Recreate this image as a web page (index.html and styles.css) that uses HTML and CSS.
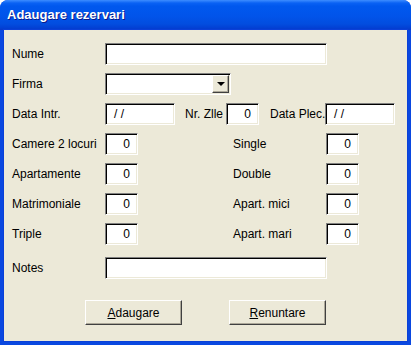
FILE: index.html
```html
<!DOCTYPE html>
<html lang="ro">
<head>
    <meta charset="UTF-8">
    <title>Adaugare rezervari</title>
    <link rel="stylesheet" href="styles.css">
</head>
<body>
    <div class="window">
        <div class="titlebar">Adaugare rezervari</div>

        <div class="client">
            <!-- Nume / Firma -->
            <div class="row">
                <span class="label">Nume</span>
                <div class="field wide"></div>
            </div>
            <div class="row">
                <span class="label">Firma</span>
                <div class="field combo">
                    <span class="combo-btn"><span class="arrow"></span></span>
                </div>
            </div>

            <!-- Dates -->
            <div class="row">
                <span class="label">Data Intr.</span>
                <div class="field date">/ /</div>
                <span class="label-zile">Nr. Zlle</span>
                <div class="field num">0</div>
                <span class="label-plec">Data Plec.</span>
                <div class="field date">/ /</div>
            </div>

            <!-- Rooms -->
            <div class="row">
                <span class="label">Camere 2 locuri</span>
                <div class="field num">0</div>
                <span class="label-right">Single</span>
                <div class="field num">0</div>
            </div>
            <div class="row">
                <span class="label">Apartamente</span>
                <div class="field num">0</div>
                <span class="label-right">Double</span>
                <div class="field num">0</div>
            </div>
            <div class="row">
                <span class="label">Matrimoniale</span>
                <div class="field num">0</div>
                <span class="label-right">Apart. mici</span>
                <div class="field num">0</div>
            </div>
            <div class="row">
                <span class="label">Triple</span>
                <div class="field num">0</div>
                <span class="label-right">Apart. mari</span>
                <div class="field num">0</div>
            </div>

            <div class="row notes">
                <span class="label">Notes</span>
                <div class="field wide"></div>
            </div>

            <div class="buttons">
                <button><u>A</u>daugare</button>
                <button><u>R</u>enuntare</button>
            </div>
        </div>
    </div>
</body>
</html>
```

FILE: styles.css
```css
body {
    margin: 0;
    background: #fff;
    font-family: "Liberation Sans", Arial, sans-serif;
    font-size: 12px;
}
.window {
    width: 411px;
    height: 345px;
    border-radius: 8px 8px 0 0;
    overflow: hidden;
    background: #0a48e0;
    display: flex;
    flex-direction: column;
}
.titlebar {
    height: 30px;
    flex: none;
    box-sizing: border-box;
    padding: 7px 0 0 7px;
    color: #fff;
    font-weight: bold;
    font-size: 13px;
    text-shadow: 1px 1px #0a1a8a;
    background: linear-gradient(to bottom, #3d8dff 0, #0a62f4 3px, #0058ee 6px, #0154ea 16px, #024ddf 24px, #0240d4 28px, #0838c8 30px);
}
.client {
    flex: 1;
    margin: 0 4px 4px 4px;
    background: #ece9d8;
    padding: 13px 0 0 8px;
    box-shadow: 0 0 0 1px #0a40d8;
}
.row {
    display: flex;
    align-items: center;
    height: 22px;
    margin-bottom: 8px;
    white-space: nowrap;
}
.row > * {
    flex: none;
}
.label {
    width: 93px;
}
.label-zile {
    margin-left: 10px;
    width: 41px;
}
.label-plec {
    margin-left: 11px;
    width: 55px;
}
.label-right {
    margin-left: 95px;
    width: 93px;
}
.field {
    box-sizing: border-box;
    height: 22px;
    background: #fff;
    border: 1px solid;
    border-color: #808080 #fff #fff #808080;
    box-shadow: inset 1px 1px #000, inset -1px -1px #ece9d8;
    line-height: 20px;
}
.wide {
    width: 222px;
}
.combo {
    width: 126px;
    display: flex;
    justify-content: flex-end;
    padding: 1px;
}
.combo-btn {
    width: 17px;
    height: 18px;
    box-sizing: border-box;
    background: #ece9d8;
    border: 1px solid;
    border-color: #fff #404040 #404040 #fff;
    box-shadow: inset -1px -1px #aca899;
    display: flex;
    align-items: center;
    justify-content: center;
}
.arrow {
    width: 0;
    height: 0;
    border-left: 4px solid transparent;
    border-right: 4px solid transparent;
    border-top: 4px solid #000;
}
.date {
    width: 70px;
    padding-left: 8px;
}
.num {
    width: 33px;
    text-align: right;
    padding-right: 7px;
}
.notes {
    margin-top: 12px;
}
.buttons {
    display: flex;
    gap: 47px;
    margin: 21px 0 0 73px;
}
button {
    width: 97px;
    height: 25px;
    font-family: "Liberation Sans", Arial, sans-serif;
    font-size: 12px;
    color: #000;
    background: #ece9d8;
    border: 1px solid;
    border-color: #fff #404040 #404040 #fff;
    box-shadow: inset -1px -1px #aca899;
    padding: 0;
}
```
